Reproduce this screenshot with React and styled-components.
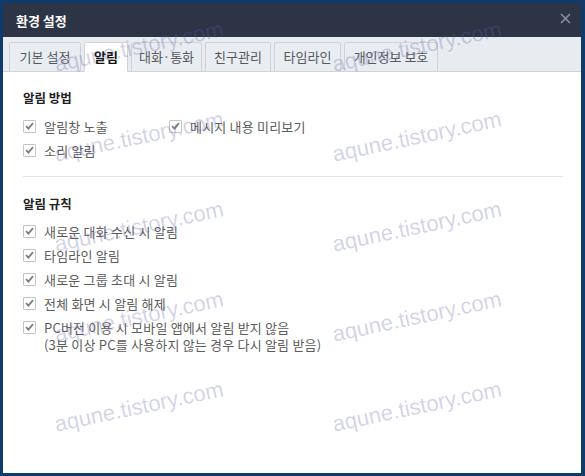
import React from "react";
import styled, { createGlobalStyle } from "styled-components";

const GlobalStyle = createGlobalStyle`
  html, body {
    margin: 0;
    padding: 0;
  }
  body {
    font-family: "Noto Sans CJK KR", "Noto Sans", sans-serif;
  }
`;

const TABS = [
  { label: "기본 설정", width: 72 },
  { label: "알림", width: 44 },
  { label: "대화·통화", width: 71 },
  { label: "친구관리", width: 66 },
  { label: "타임라인", width: 67 },
  { label: "개인정보 보호", width: 94 },
];

const METHOD_OPTIONS = ["알림창 노출", "메시지 내용 미리보기", "소리 알림"];

const RULE_OPTIONS = [
  ["새로운 대화 수신 시 알림"],
  ["타임라인 알림"],
  ["새로운 그룹 초대 시 알림"],
  ["전체 화면 시 알림 해제"],
  [
    "PC버전 이용 시 모바일 앱에서 알림 받지 않음",
    "(3분 이상 PC를 사용하지 않는 경우 다시 알림 받음)",
  ],
];

const Check = ({ lines }) => (
  <OptionRow>
    <Box>
      <svg width="9" height="8" viewBox="0 0 9 8">
        <path
          d="M1 4.2 L3.4 6.6 L8 1.2"
          fill="none"
          stroke="#7d7d7d"
          strokeWidth="1.8"
        />
      </svg>
    </Box>
    <Label>
      {lines.map((line) => (
        <span key={line}>{line}</span>
      ))}
    </Label>
  </OptionRow>
);

const App = () => (
  <Page>
    <GlobalStyle />
    <Dialog>
      <TitleBar>
        <Title>환경 설정</Title>
        <CloseButton>
          <svg width="11" height="11" viewBox="0 0 11 11">
            <path d="M1 1 L10 10 M10 1 L1 10" stroke="#8a909c" strokeWidth="1.6" />
          </svg>
        </CloseButton>
      </TitleBar>

      <TabBar>
        {TABS.map((tab) => (
          <Tab key={tab.label} $width={tab.width} $active={tab.label === "알림"}>
            {tab.label}
          </Tab>
        ))}
      </TabBar>

      <Content>
        <SectionTitle>알림 방법</SectionTitle>
        <MethodGrid>
          {METHOD_OPTIONS.map((opt) => (
            <Check key={opt} lines={[opt]} />
          ))}
        </MethodGrid>

        <Divider />

        <SectionTitle>알림 규칙</SectionTitle>
        <RuleList>
          {RULE_OPTIONS.map((lines) => (
            <Check key={lines[0]} lines={lines} />
          ))}
        </RuleList>
      </Content>

      <WatermarkLayer>
        {Array.from({ length: 10 }).map((_, i) => (
          <WatermarkCell key={i}>
            <Watermark>aqune.tistory.com</Watermark>
          </WatermarkCell>
        ))}
      </WatermarkLayer>
    </Dialog>
  </Page>
);

// Styles
const Page = styled.div`
  width: 585px;
  height: 476px;
  box-sizing: border-box;
  padding: 3px 4px 3px 3px;
  background: #0f3a6c;
  position: relative;
`;

const Dialog = styled.div`
  height: 100%;
  display: flex;
  flex-direction: column;
  background: #ffffff;
`;

const TitleBar = styled.div`
  height: 34px;
  flex-shrink: 0;
  display: flex;
  align-items: center;
  padding: 0 9px 0 13px;
  background: #2d3446;
`;

const Title = styled.div`
  color: #ffffff;
  font-size: 13px;
  font-weight: 700;
  line-height: 18px;
  padding-top: 2px;
`;

const CloseButton = styled.div`
  margin-left: auto;
  display: flex;
  align-items: center;
  justify-content: center;
  width: 14px;
  height: 14px;
  margin-top: -3px;
`;

const TabBar = styled.div`
  height: 34px;
  flex-shrink: 0;
  display: flex;
  align-items: flex-end;
  gap: 3px;
  padding: 0 0 0 6px;
  background: #e8ebf0;
  border-bottom: 1px solid #cfd3d9;
`;

const Tab = styled.div`
  width: ${(p) => p.$width}px;
  height: 30px;
  box-sizing: border-box;
  margin-bottom: -1px;
  display: flex;
  align-items: center;
  justify-content: center;
  font-size: 13px;
  line-height: 16px;
  border: 1px solid #cfd3d9;
  border-bottom-color: ${(p) => (p.$active ? "#ffffff" : "#cfd3d9")};
  border-radius: 2px 2px 0 0;
  background: ${(p) => (p.$active ? "#ffffff" : "#e9ecf0")};
  color: ${(p) => (p.$active ? "#111111" : "#555a60")};
  font-weight: ${(p) => (p.$active ? 700 : 400)};
  white-space: nowrap;
`;

const Content = styled.div`
  flex: 1;
  padding: 17px 18px 0 20px;
`;

const SectionTitle = styled.div`
  font-size: 12.5px;
  font-weight: 700;
  line-height: 18px;
  color: #222222;
`;

const MethodGrid = styled.div`
  margin-top: 7px;
  display: grid;
  grid-template-columns: 146px auto;
`;

const RuleList = styled.div`
  margin-top: 6px;
  display: flex;
  flex-direction: column;
`;

const OptionRow = styled.div`
  display: flex;
  align-items: flex-start;
  padding: 3.5px 0;
`;

const Box = styled.div`
  width: 13px;
  height: 13px;
  box-sizing: border-box;
  margin-top: 2px;
  margin-right: 8px;
  flex-shrink: 0;
  border: 1px solid #c6c6c6;
  border-radius: 1px;
  background: #ffffff;
  display: flex;
  align-items: center;
  justify-content: center;
`;

const Label = styled.div`
  display: flex;
  flex-direction: column;
  font-size: 13px;
  letter-spacing: 0.2px;
  line-height: 17px;
  color: #5c5c5c;
  white-space: nowrap;
`;

const Divider = styled.div`
  height: 1px;
  background: #e6e6e6;
  margin: 14px 0 18px;
`;

const WatermarkLayer = styled.div`
  position: absolute;
  inset: 0;
  pointer-events: none;
  display: grid;
  grid-template-columns: 278px 278px;
  grid-auto-rows: 90px;
  padding-top: 2px;
  overflow: hidden;
`;

const WatermarkCell = styled.div`
  display: flex;
  align-items: center;
  justify-content: center;
`;

const Watermark = styled.span`
  font-family: "Liberation Sans", Arial, sans-serif;
  font-size: 22px;
  line-height: 22px;
  color: rgba(95, 95, 170, 0.28);
  transform: rotate(-12deg);
  white-space: nowrap;
`;

export default App;
